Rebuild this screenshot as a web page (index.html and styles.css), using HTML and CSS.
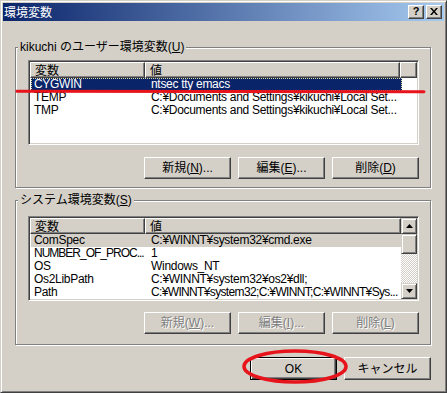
FILE: index.html
```html
<!DOCTYPE html>
<html lang="ja">
<head>
<meta charset="utf-8">
<title>環境変数</title>
<link rel="stylesheet" href="styles.css">
</head>
<body>
<div class="window">
  <div class="titlebar">
    <span class="title">環境変数</span>
    <div class="tbtns">
      <span class="tbtn help">?</span>
      <span class="tbtn close"><svg width="8" height="7" viewBox="0 0 8 7"><path d="M0 0h2l2 2.5 2-2.5h2l-3 3.5 3 3.5h-2l-2-2.5-2 2.5h-2l3-3.5z" fill="#000"/></svg></span>
    </div>
  </div>
  <div class="body">
    <fieldset class="group g1">
      <legend>kikuchi のユーザー環境変数(<u>U</u>)</legend>
      <div class="gin">
        <div class="list">
          <div class="lmain">
            <div class="lhead"><div class="hc c1">変数</div><div class="hc c2">値</div><div class="hc c3"></div></div>
            <div class="row sel"><span class="k">CYGWIN</span><span class="v">ntsec tty emacs</span></div>
            <div class="row"><span class="k">TEMP</span><span class="v">C:¥Documents and Settings¥kikuchi¥Local Set...</span></div>
            <div class="row"><span class="k">TMP</span><span class="v">C:¥Documents and Settings¥kikuchi¥Local Set...</span></div>
          </div>
        </div>
        <div class="btnrow">
          <button class="btn">新規(<u>N</u>)...</button>
          <button class="btn">編集(<u>E</u>)...</button>
          <button class="btn">削除(<u>D</u>)</button>
        </div>
      </div>
    </fieldset>
    <fieldset class="group g2">
      <legend>システム環境変数(<u>S</u>)</legend>
      <div class="gin">
        <div class="list">
          <div class="lmain">
            <div class="lhead"><div class="hc c1">変数</div><div class="hc c2 wide">値</div></div>
            <div class="row insel"><span class="k">ComSpec</span><span class="v">C:¥WINNT¥system32¥cmd.exe</span></div>
            <div class="row"><span class="k tight">NUMBER_OF_PROC...</span><span class="v">1</span></div>
            <div class="row"><span class="k">OS</span><span class="v">Windows_NT</span></div>
            <div class="row"><span class="k">Os2LibPath</span><span class="v">C:¥WINNT¥system32¥os2¥dll;</span></div>
            <div class="row"><span class="k">Path</span><span class="v tight">C:¥WINNT¥system32;C:¥WINNT;C:¥WINNT¥Sys...</span></div>
          </div>
          <div class="vscroll">
            <div class="sbb"><svg width="7" height="4" viewBox="0 0 7 4"><path d="M3.5 0L7 4H0z" fill="#000"/></svg></div>
            <div class="thumb"></div>
            <div class="track"></div>
            <div class="sbb"><svg width="7" height="4" viewBox="0 0 7 4"><path d="M0 0h7L3.5 4z" fill="#000"/></svg></div>
          </div>
        </div>
        <div class="btnrow">
          <button class="btn" disabled>新規(<u>W</u>)...</button>
          <button class="btn" disabled>編集(<u>I</u>)...</button>
          <button class="btn" disabled>削除(<u>L</u>)</button>
        </div>
      </div>
    </fieldset>
    <div class="dlgbtns">
      <button class="btn dbtn default">OK</button>
      <button class="btn dbtn">キャンセル</button>
    </div>
  </div>
  <svg class="annot" width="447" height="393" viewBox="0 0 447 393">
    <path d="M17 91.2 L424 91.8" stroke="#e8141c" stroke-width="3" stroke-linecap="round" fill="none"/>
    <ellipse cx="295" cy="366.5" rx="51" ry="15.5" stroke="#e8141c" stroke-width="3.5" fill="none"/>
  </svg>
</div>
</body>
</html>
```
FILE: styles.css
```css
* { box-sizing: border-box; }
html, body { margin: 0; padding: 0; }
body {
  font-family: "Liberation Sans", "Noto Sans CJK JP", sans-serif;
  font-size: 12px;
  line-height: 13px;
  color: #000;
  background: #d4d0c8;
}
.window {
  position: relative;
  width: 447px;
  height: 393px;
  background: #d4d0c8;
  border: 1px solid;
  border-color: #d4d0c8 #404040 #404040 #d4d0c8;
  box-shadow: inset 1px 1px #fff, inset -1px -1px #808080;
  padding: 2px;
  overflow: hidden;
}
.titlebar {
  height: 18px;
  display: flex;
  align-items: center;
  padding: 0 2px 0 1px;
  background: linear-gradient(90deg, #0a246a 0%, #a6caf0 100%);
  color: #fff;
}
.title {
  font-family: "Noto Sans CJK JP", sans-serif;
  font-size: 12px;
  line-height: 14px;
}
.tbtns { margin-left: auto; display: flex; gap: 2px; }
.tbtn {
  width: 16px;
  height: 14px;
  display: flex;
  align-items: center;
  justify-content: center;
  background: #d4d0c8;
  border: 1px solid;
  border-color: #fff #404040 #404040 #fff;
  box-shadow: inset -1px -1px #808080;
  color: #000;
}
.help { font-weight: bold; font-size: 11px; line-height: 11px; padding-bottom: 1px; }
.close svg { display: block; margin-top: -1px; }

.body { padding: 19px 13px 0 12px; }

.group {
  margin: 0;
  padding: 0;
  min-width: 0;
  border: 1px solid #808080;
  box-shadow: inset 1px 1px #fff, 1px 1px #fff;
}
.group legend {
  margin-left: 2px;
  padding: 0 2px;
  line-height: 14px;
  background: #d4d0c8;
}
.g2 { margin-top: 5px; }
.gin { padding: 6px 11px 8px 12px; }
.g2 .gin { padding-top: 9px; padding-bottom: 10px; }

.list {
  height: 85px;
  display: flex;
  background: #fff;
  border: 1px solid;
  border-color: #808080 #fff #fff #808080;
  box-shadow: inset 1px 1px #404040, inset -1px -1px #d4d0c8;
  padding: 1px;
  overflow: hidden;
}
.lmain { flex: 1; min-width: 0; }
.lhead { display: flex; height: 16px; }
.hc {
  flex: none;
  height: 16px;
  background: #d4d0c8;
  border: 1px solid;
  border-color: #fff #404040 #404040 #fff;
  box-shadow: inset -1px -1px #808080;
  padding-left: 4px;
  line-height: 14px;
  font-family: "Noto Sans CJK JP", sans-serif;
}
.c1 { width: 115px; }
.c2 { width: 255px; }
.c2.wide { width: 256px; }
.c3 { flex: 1; }
.row {
  display: flex;
  height: 13px;
  margin-left: 1px;
  width: 371px;
  white-space: nowrap;
  letter-spacing: -0.3px;
}
.g2 .row { width: 370px; }
.row .k { flex: none; width: 118px; padding-left: 3px; overflow: hidden; }
.row .k.tight { letter-spacing: -1px; }
.row .v { flex: 1; min-width: 0; padding-left: 2px; overflow: hidden; }
.row .v.tight { letter-spacing: -0.65px; }
.row.sel {
  background: #0a246a;
  color: #fff;
  outline: 1px dotted #e8dc98;
  outline-offset: -1px;
}
.row.insel { background: #d4d0c8; }

.vscroll {
  flex: none;
  width: 16px;
  display: flex;
  flex-direction: column;
  background-color: #fff;
  background-image: conic-gradient(#fff 25%, #d4d0c8 0 50%, #fff 0 75%, #d4d0c8 0);
  background-size: 2px 2px;
}
.sbb, .thumb {
  background: #d4d0c8;
  border: 1px solid;
  border-color: #d4d0c8 #404040 #404040 #d4d0c8;
  box-shadow: inset 1px 1px #fff, inset -1px -1px #808080;
}
.sbb { height: 16px; display: flex; align-items: center; justify-content: center; }
.sbb svg { display: block; }
.thumb { height: 20px; }
.track { flex: 1; }

.btnrow {
  display: flex;
  justify-content: flex-end;
  gap: 7px;
  margin-top: 12px;
}
.g2 .btnrow { margin-top: 11px; }
.btn {
  width: 87px;
  height: 22px;
  padding: 0;
  margin: 0;
  font-family: "Liberation Sans", "Noto Sans CJK JP", sans-serif;
  font-size: 12px;
  line-height: 14px;
  color: #000;
  background: #d4d0c8;
  border: 1px solid;
  border-color: #fff #404040 #404040 #fff;
  box-shadow: inset -1px -1px #808080;
  border-radius: 0;
}
.btn:disabled {
  color: #808080;
  text-shadow: 1px 1px #fff;
}
.dlgbtns {
  display: flex;
  justify-content: flex-end;
  gap: 7px;
  margin-top: 12px;
}
.dbtn { height: 23px; }
.btn.default {
  border-color: #000;
  box-shadow: inset 1px 1px #fff, inset -1px -1px #404040, inset -2px -2px #808080;
}
.annot {
  position: absolute;
  left: -1px;
  top: -1px;
  pointer-events: none;
}
```
